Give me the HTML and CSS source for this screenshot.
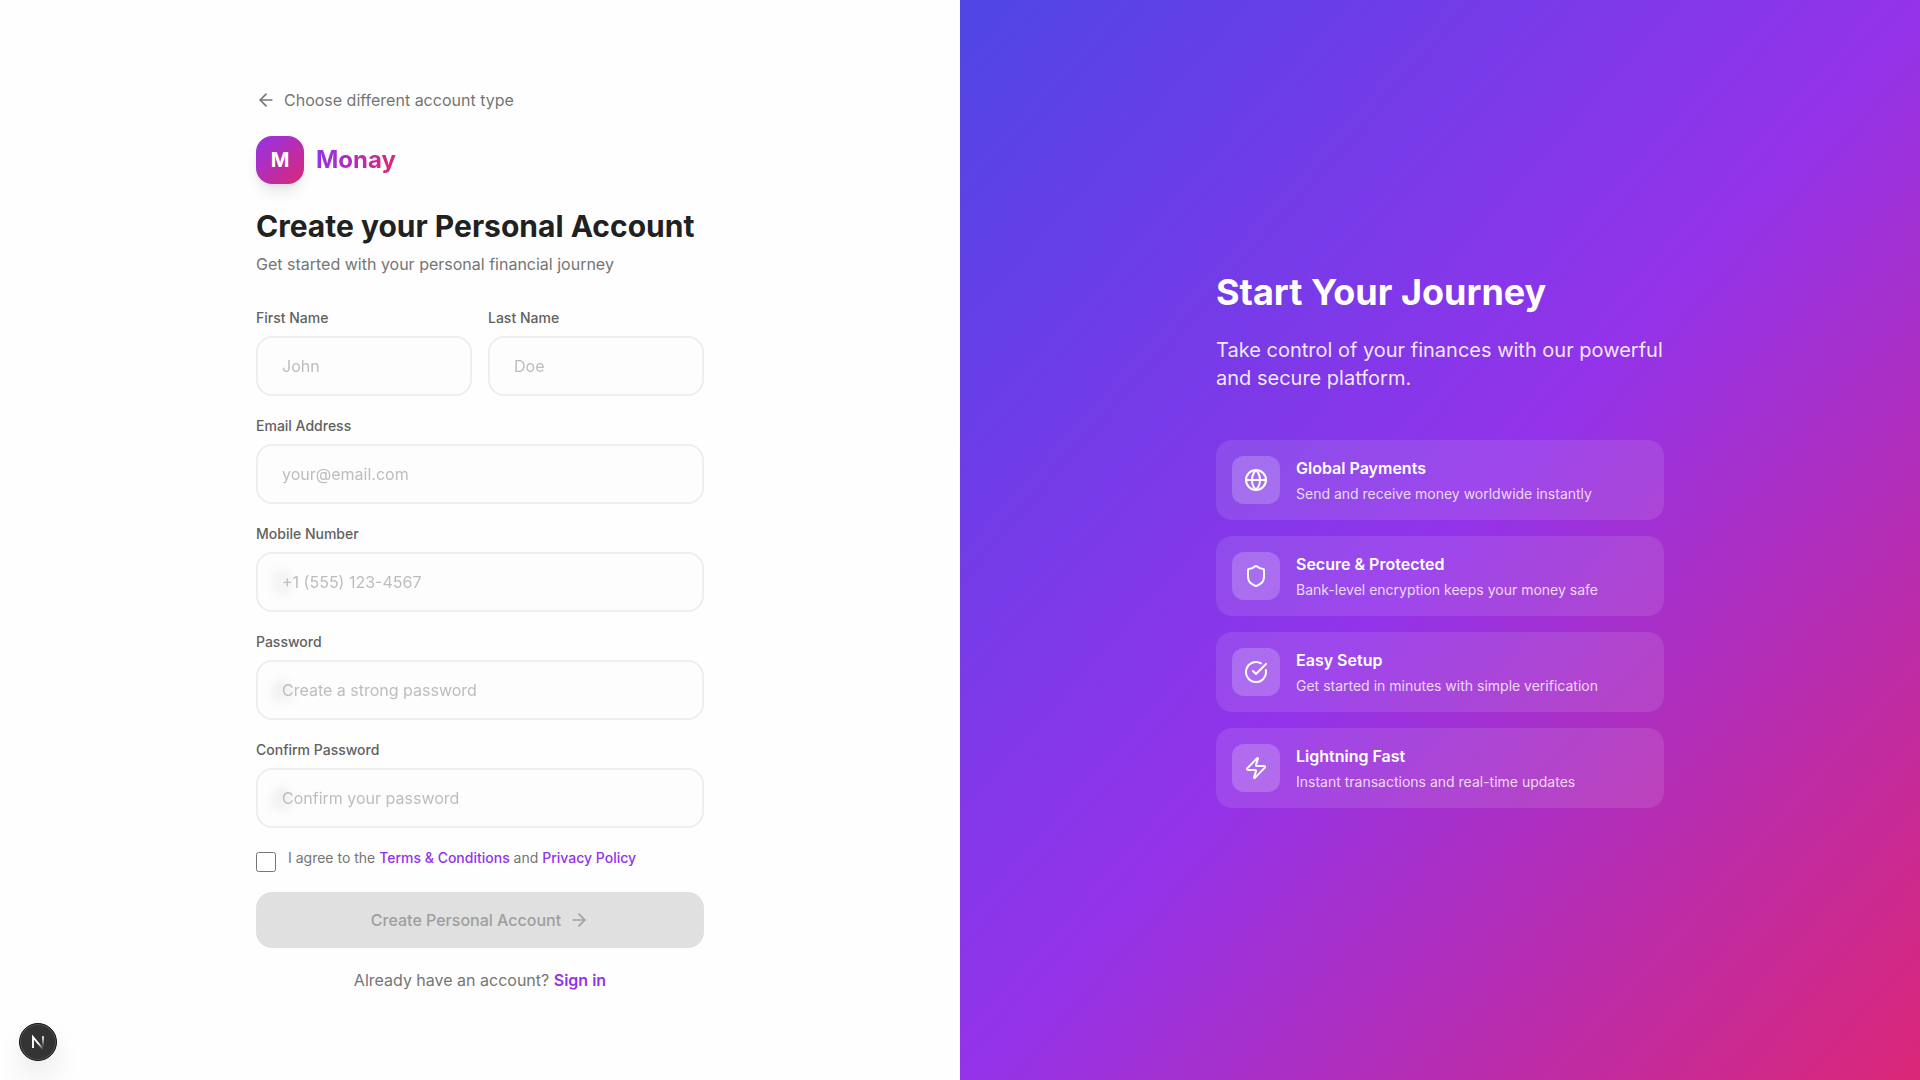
FILE: index.html
```html
<!DOCTYPE html>
<html lang="en">
<head>
<meta charset="utf-8">
<meta name="viewport" content="width=device-width, initial-scale=1">
<title>Monay</title>
<link rel="stylesheet" href="styles.css">
</head>
<body>
<div class="page">
  <main class="panel panel-form">
    <div class="content">
      <a class="back" href="#">
        <svg class="icon" viewBox="0 0 24 24"><path d="m12 19-7-7 7-7"/><path d="M19 12H5"/></svg>
        Choose different account type
      </a>
      <div class="brand">
        <span class="brand-mark">M</span>
        <span class="brand-name">Monay</span>
      </div>
      <h1 class="title">Create your Personal Account</h1>
      <p class="subtitle">Get started with your personal financial journey</p>

      <form class="form">
        <div class="name-row">
          <div class="field">
            <label for="first">First Name</label>
            <input class="input" id="first" type="text" placeholder="John">
          </div>
          <div class="field">
            <label for="last">Last Name</label>
            <input class="input" id="last" type="text" placeholder="Doe">
          </div>
        </div>
        <div class="field">
          <label for="email">Email Address</label>
          <input class="input" id="email" type="email" placeholder="your@email.com">
        </div>
        <div class="field">
          <label for="mobile">Mobile Number</label>
          <div class="control">
            <svg class="icon control-icon" viewBox="0 0 24 24"><rect x="5" y="2" width="14" height="20" rx="2"/><path d="M12 18h.01"/></svg>
            <input class="input" id="mobile" type="tel" placeholder="+1 (555) 123-4567">
          </div>
        </div>
        <div class="field">
          <label for="password">Password</label>
          <div class="control">
            <svg class="icon control-icon" viewBox="0 0 24 24"><rect x="3" y="11" width="18" height="11" rx="2"/><path d="M7 11V7a5 5 0 0 1 10 0v4"/></svg>
            <input class="input" id="password" type="password" placeholder="Create a strong password">
          </div>
        </div>
        <div class="field">
          <label for="confirm">Confirm Password</label>
          <div class="control">
            <svg class="icon control-icon" viewBox="0 0 24 24"><rect x="3" y="11" width="18" height="11" rx="2"/><path d="M7 11V7a5 5 0 0 1 10 0v4"/></svg>
            <input class="input" id="confirm" type="password" placeholder="Confirm your password">
          </div>
        </div>
        <div class="terms">
          <input class="checkbox" id="terms" type="checkbox">
          <label for="terms">I agree to the <a href="#">Terms &amp; Conditions</a> and <a href="#">Privacy Policy</a></label>
        </div>
        <button class="submit" type="submit" disabled>
          Create Personal Account
          <svg class="icon" viewBox="0 0 24 24"><path d="M5 12h14"/><path d="m12 5 7 7-7 7"/></svg>
        </button>
        <p class="signin">Already have an account? <a href="#">Sign in</a></p>
      </form>
    </div>
  </main>

  <aside class="panel panel-promo">
    <div class="content">
      <h2 class="promo-title">Start Your Journey</h2>
      <p class="promo-text">Take control of your finances with our powerful and secure platform.</p>
      <ul class="features">
        <li class="feature">
          <span class="feature-icon"><svg class="icon icon-lg" viewBox="0 0 24 24"><circle cx="12" cy="12" r="10"/><path d="M12 2a14.5 14.5 0 0 0 0 20 14.5 14.5 0 0 0 0-20"/><path d="M2 12h20"/></svg></span>
          <div class="feature-body"><h3>Global Payments</h3><p>Send and receive money worldwide instantly</p></div>
        </li>
        <li class="feature">
          <span class="feature-icon"><svg class="icon icon-lg" viewBox="0 0 24 24"><path d="M20 13c0 5-3.5 7.5-7.66 8.95a1 1 0 0 1-.67-.01C7.5 20.5 4 18 4 13V6a1 1 0 0 1 1-1c2 0 4.500-1.200 6.240-2.720a1.170 1.170 0 0 1 1.520 0C14.510 3.810 17 5 19 5a1 1 0 0 1 1 1z"/></svg></span>
          <div class="feature-body"><h3>Secure &amp; Protected</h3><p>Bank-level encryption keeps your money safe</p></div>
        </li>
        <li class="feature">
          <span class="feature-icon"><svg class="icon icon-lg" viewBox="0 0 24 24"><path d="M21.801 10A10 10 0 1 1 17 3.335"/><path d="m9 11 3 3L22 4"/></svg></span>
          <div class="feature-body"><h3>Easy Setup</h3><p>Get started in minutes with simple verification</p></div>
        </li>
        <li class="feature">
          <span class="feature-icon"><svg class="icon icon-lg" viewBox="0 0 24 24"><path d="M4 14a1 1 0 0 1-.78-1.630l9.900-10.200a.5.5 0 0 1 .86.460l-1.920 6.020A1 1 0 0 0 13 10h7a1 1 0 0 1 .78 1.630l-9.900 10.200a.5.5 0 0 1-.86-.460l1.920-6.020A1 1 0 0 0 11 14z"/></svg></span>
          <div class="feature-body"><h3>Lightning Fast</h3><p>Instant transactions and real-time updates</p></div>
        </li>
      </ul>
    </div>
  </aside>
</div>

<button class="dev-badge" type="button" aria-label="Open developer tools">
  <svg viewBox="0 0 36 36" fill="none">
    <defs>
      <linearGradient id="stem" x1="0" y1="12" x2="0" y2="23" gradientUnits="userSpaceOnUse"><stop stop-color="#fff"/><stop offset="1" stop-color="#fff" stop-opacity="0"/></linearGradient>
      <linearGradient id="slash" x1="19" y1="19" x2="24" y2="25" gradientUnits="userSpaceOnUse"><stop stop-color="#fff"/><stop offset="1" stop-color="#fff" stop-opacity="0"/></linearGradient>
    </defs>
    <path d="M13 24V13.200L23 25" stroke="url(#slash)" stroke-width="1.900"/>
    <path d="M23 12.200v10.500" stroke="url(#stem)" stroke-width="1.900"/>
  </svg>
</button>
</body>
</html>
```
FILE: styles.css
```css
*, *::before, *::after { box-sizing: border-box; }

body {
  margin: 0;
  font-family: Inter, "Liberation Sans", sans-serif;
  font-size: 16px;
  line-height: 24px;
  color: #212121;
  background: #fefefe;
}

h1, h2, h3, p, ul { margin: 0; padding: 0; }
a { color: #9333ea; font-weight: 500; text-decoration: none; }
button, input { font: inherit; }

.page {
  display: grid;
  grid-template-columns: 1fr 1fr;
  min-height: 100vh;
}

.panel {
  display: flex;
  align-items: center;
  justify-content: center;
  padding: 48px;
}

.panel-promo {
  color: #fff;
  background: linear-gradient(to bottom right, #4f46e5, #9333ea, #db2777);
}

.content { width: 100%; max-width: 448px; }

.icon {
  width: 20px;
  height: 20px;
  flex: none;
  fill: none;
  stroke: currentColor;
  stroke-width: 2;
  stroke-linecap: round;
  stroke-linejoin: round;
}
.icon-lg { width: 24px; height: 24px; }

.back {
  display: flex;
  align-items: center;
  gap: 8px;
  margin-bottom: 24px;
  color: #757575;
  font-weight: 400;
}

.brand {
  display: flex;
  align-items: center;
  gap: 12px;
  margin-bottom: 24px;
}
.brand-mark {
  display: grid;
  place-items: center;
  width: 48px;
  height: 48px;
  border-radius: 16px;
  color: #fff;
  font-size: 20px;
  font-weight: 700;
  background: linear-gradient(to bottom right, #9333ea, #db2777);
  box-shadow: 0 10px 15px -3px rgb(0 0 0 / .1), 0 4px 6px -4px rgb(0 0 0 / .1);
}
.brand-name {
  font-size: 24px;
  line-height: 32px;
  font-weight: 700;
  color: transparent;
  background: linear-gradient(to right, #9333ea, #db2777);
  -webkit-background-clip: text;
  background-clip: text;
}

.title {
  margin-bottom: 8px;
  font-size: 30px;
  line-height: 36px;
  font-weight: 700;
}
.subtitle { margin-bottom: 32px; color: #757575; }

.form { display: flex; flex-direction: column; gap: 20px; }
.name-row { display: grid; grid-template-columns: 1fr 1fr; gap: 16px; }
.field { display: flex; flex-direction: column; gap: 8px; }
.field label {
  font-size: 14px;
  line-height: 20px;
  font-weight: 500;
  color: #616161;
}

.control { position: relative; }
.control-icon {
  position: absolute;
  top: 20px;
  left: 16px;
  color: #9e9e9e;
}
.input {
  position: relative;
  display: block;
  width: 100%;
  height: 60px;
  padding: 0 24px;
  border: 2px solid #eee;
  border-radius: 16px;
  color: #212121;
  background: rgb(251 251 251 / .6);
  backdrop-filter: blur(4px);
}
.input::placeholder { color: #bdbdbd; opacity: 1; }

.terms { display: flex; align-items: flex-start; gap: 12px; }
.terms label { font-size: 14px; line-height: 20px; color: #757575; }
.checkbox { width: 20px; height: 20px; margin: 4px 0 0; accent-color: #9333ea; }

.submit {
  display: flex;
  align-items: center;
  justify-content: center;
  gap: 8px;
  height: 56px;
  border: 0;
  border-radius: 16px;
  font-weight: 500;
  color: #9e9e9e;
  background: #e0e0e0;
}

.signin { text-align: center; color: #757575; }
.signin a { font-weight: 600; }

.promo-title {
  margin-bottom: 24px;
  font-size: 36px;
  line-height: 40px;
  font-weight: 700;
}
.promo-text {
  margin-bottom: 48px;
  font-size: 20px;
  line-height: 28px;
  color: rgb(255 255 255 / .9);
}

.features { display: grid; gap: 16px; list-style: none; }
.feature {
  display: flex;
  align-items: center;
  gap: 16px;
  padding: 16px;
  border-radius: 16px;
  background: rgb(255 255 255 / .1);
}
.feature-icon {
  display: grid;
  place-items: center;
  width: 48px;
  height: 48px;
  border-radius: 12px;
  background: rgb(255 255 255 / .2);
}
.feature-body { display: grid; gap: 4px; }
.feature h3 { font-size: 16px; line-height: 24px; font-weight: 600; }
.feature p { font-size: 14px; line-height: 20px; color: rgb(255 255 255 / .8); }

.dev-badge {
  position: fixed;
  left: 19px;
  bottom: 19px;
  width: 38px;
  height: 38px;
  padding: 0;
  border: 1px solid #111;
  border-radius: 50%;
  background: #333;
  box-shadow: inset 0 0 0 1px #555, 0 16px 32px -8px rgb(0 0 0 / .24);
}
.dev-badge svg { display: block; width: 100%; height: 100%; }
```
